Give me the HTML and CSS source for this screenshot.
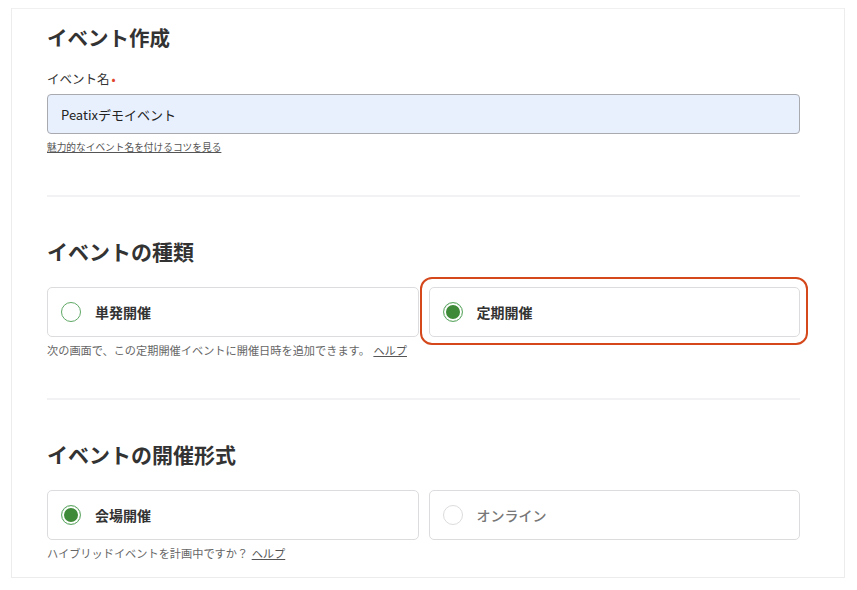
FILE: index.html
```html
<!DOCTYPE html>
<html lang="ja">
<head>
<meta charset="utf-8">
<title>イベント作成</title>
<link rel="stylesheet" href="styles.css">
</head>
<body>
<main class="card">
  <section class="section first">
    <h1 class="title">イベント作成</h1>
    <label class="label">イベント名<span class="req">•</span></label>
    <div class="input">Peatixデモイベント</div>
    <a class="tip" href="#">魅力的なイベント名を付けるコツを見る</a>
  </section>
  <hr class="divider top">
  <section class="section">
    <h2 class="heading">イベントの種類</h2>
    <div class="options">
      <div class="option">
        <span class="radio"></span>
        <span class="opt-label">単発開催</span>
      </div>
      <div class="option highlighted">
        <span class="radio checked"></span>
        <span class="opt-label">定期開催</span>
      </div>
    </div>
    <p class="help">次の画面で、この定期開催イベントに開催日時を追加できます。 <a href="#">ヘルプ</a></p>
  </section>
  <hr class="divider">
  <section class="section">
    <h2 class="heading">イベントの開催形式</h2>
    <div class="options">
      <div class="option">
        <span class="radio checked"></span>
        <span class="opt-label">会場開催</span>
      </div>
      <div class="option disabled">
        <span class="radio"></span>
        <span class="opt-label">オンライン</span>
      </div>
    </div>
    <p class="help">ハイブリッドイベントを計画中ですか？ <a href="#">ヘルプ</a></p>
  </section>
</main>
</body>
</html>
```
FILE: styles.css
```css
* { box-sizing: border-box; }
html, body { margin: 0; padding: 0; background: #fff; }
body {
  font-family: "Noto Sans CJK JP", "Liberation Sans", sans-serif;
  color: #333;
}
.card {
  margin: 8px 0 0 11px;
  width: 834px;
  height: 570px;
  border: 1px solid #ececec;
  border-top-color: #f0f0f0;
  padding: 0 44px 0 35px;
}
.section { display: flex; flex-direction: column; }
.title {
  margin: 14px 0 0;
  font-size: 20.5px;
  line-height: 28px;
  font-weight: 700;
  color: #333;
}
.label {
  margin-top: 19px;
  font-size: 12.5px;
  line-height: 18px;
  color: #333;
}
.req { color: #e0452b; margin-left: 2px; font-size: 12px; }
.input {
  margin-top: 6px;
  height: 40px;
  border: 1px solid #a9aab0;
  border-radius: 4px;
  background: #e8f0fe;
  padding-left: 13px;
  display: flex;
  align-items: center;
  font-size: 13px;
  color: #222;
}
.tip {
  margin-top: 6px;
  font-size: 9.7px;
  line-height: 14px;
  color: #555;
  text-decoration: underline;
  align-self: flex-start;
}
.divider {
  margin: 40px 0 0;
  border: 0;
  height: 2px;
  background: #f2f2f5;
}
.divider.top { margin-top: 41px; }
.heading {
  margin: 40px 0 0;
  font-size: 21px;
  line-height: 28px;
  font-weight: 700;
  color: #333;
}
.options {
  margin-top: 22px;
  display: grid;
  grid-template-columns: 1fr 1fr;
  gap: 10px;
}
.option {
  position: relative;
  height: 50px;
  border: 1px solid #dcdcdf;
  border-radius: 5px;
  display: flex;
  align-items: center;
  padding-left: 13px;
}
.highlighted::after {
  content: "";
  position: absolute;
  top: -11px;
  left: -10px;
  right: -9px;
  bottom: -9px;
  border: 2px solid #d4481c;
  border-radius: 12px;
}
.radio {
  width: 20px;
  height: 20px;
  border-radius: 50%;
  border: 1.5px solid #5fa866;
  background: #fff;
  flex: none;
}
.radio.checked {
  border-color: #5fa866;
  box-shadow: inset 0 0 0 2px #fff, inset 0 0 0 10px #3e8a38;
}
.disabled .radio { border-color: #dcdcdf; }
.opt-label {
  margin-left: 14px;
  font-size: 14px;
  font-weight: 700;
  color: #333;
}
.disabled .opt-label { color: #777; font-weight: 500; }
.help {
  margin: 5px 0 0;
  font-size: 11.2px;
  line-height: 16px;
  color: #666;
}
.help a { color: #555; text-decoration: underline; margin-left: 1px; }
```
